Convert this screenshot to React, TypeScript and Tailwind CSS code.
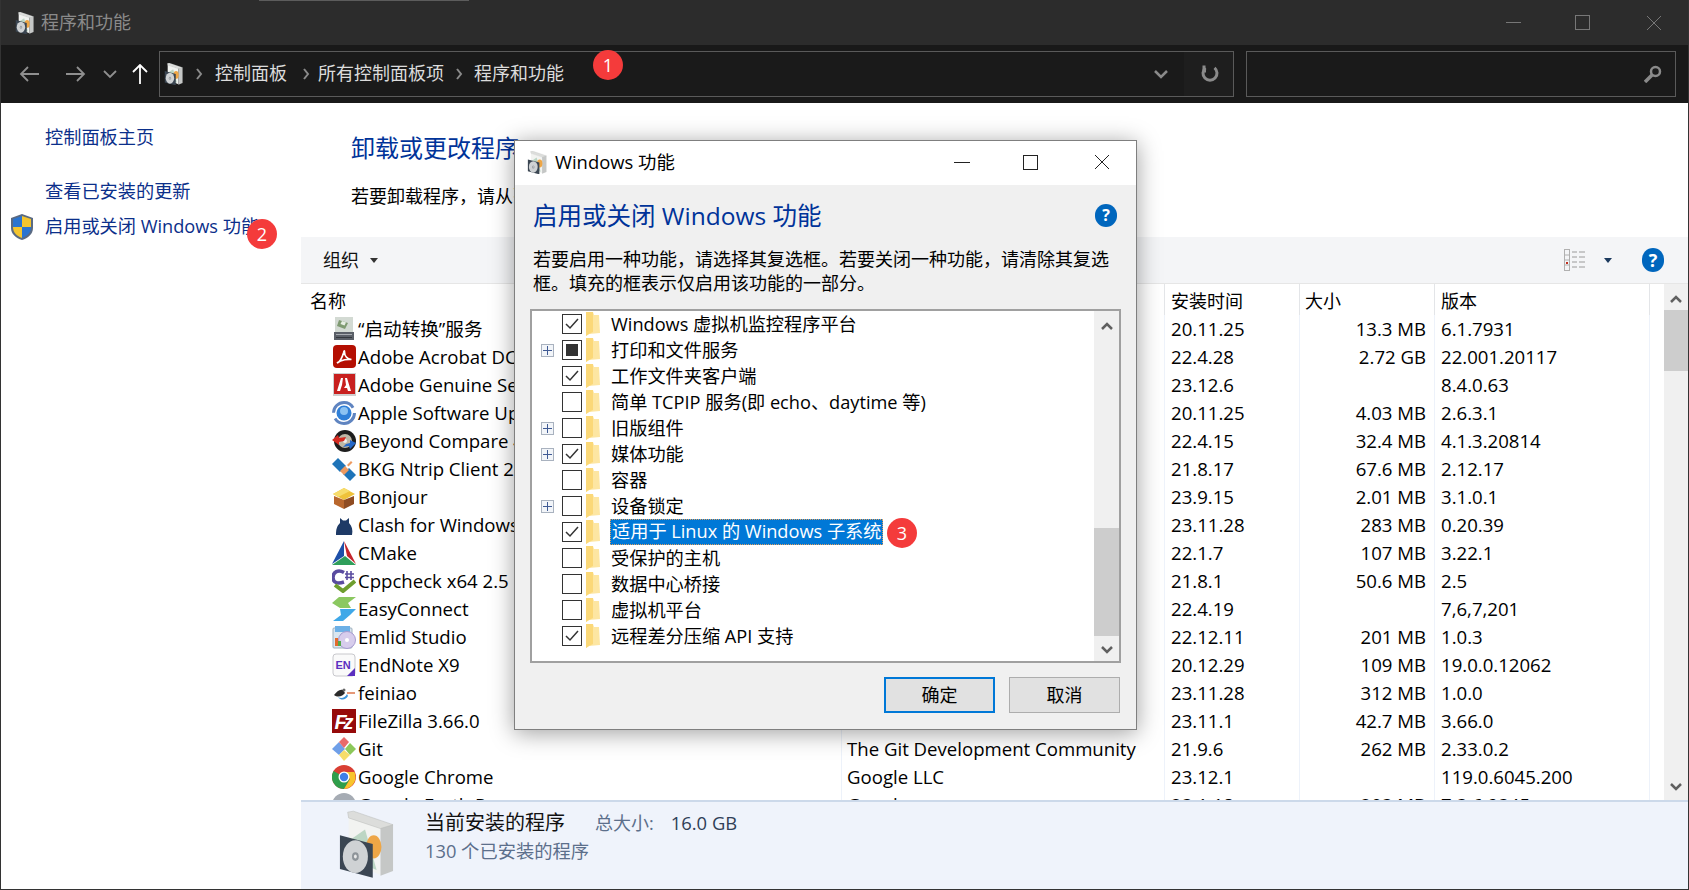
const programs = [
  { icon: "boot", name: "“启动转换”服务", publisher: "", date: "20.11.25", size: "13.3 MB", version: "6.1.7931" },
  { icon: "acrobat", name: "Adobe Acrobat DC", publisher: "", date: "22.4.28", size: "2.72 GB", version: "22.001.20117" },
  { icon: "adobe", name: "Adobe Genuine Service", publisher: "", date: "23.12.6", size: "", version: "8.4.0.63" },
  { icon: "apple", name: "Apple Software Update", publisher: "", date: "20.11.25", size: "4.03 MB", version: "2.6.3.1" },
  { icon: "beyond", name: "Beyond Compare 4", publisher: "", date: "22.4.15", size: "32.4 MB", version: "4.1.3.20814" },
  { icon: "bkg", name: "BKG Ntrip Client 2", publisher: "", date: "21.8.17", size: "67.6 MB", version: "2.12.17" },
  { icon: "bonjour", name: "Bonjour", publisher: "", date: "23.9.15", size: "2.01 MB", version: "3.1.0.1" },
  { icon: "clash", name: "Clash for Windows", publisher: "", date: "23.11.28", size: "283 MB", version: "0.20.39" },
  { icon: "cmake", name: "CMake", publisher: "", date: "22.1.7", size: "107 MB", version: "3.22.1" },
  { icon: "cppcheck", name: "Cppcheck x64 2.5", publisher: "", date: "21.8.1", size: "50.6 MB", version: "2.5" },
  { icon: "easy", name: "EasyConnect", publisher: "", date: "22.4.19", size: "", version: "7,6,7,201" },
  { icon: "emlid", name: "Emlid Studio", publisher: "", date: "22.12.11", size: "201 MB", version: "1.0.3" },
  { icon: "endnote", name: "EndNote X9", publisher: "", date: "20.12.29", size: "109 MB", version: "19.0.0.12062" },
  { icon: "feiniao", name: "feiniao", publisher: "", date: "23.11.28", size: "312 MB", version: "1.0.0" },
  { icon: "filezilla", name: "FileZilla 3.66.0", publisher: "", date: "23.11.1", size: "42.7 MB", version: "3.66.0" },
  { icon: "git", name: "Git", publisher: "The Git Development Community", date: "21.9.6", size: "262 MB", version: "2.33.0.2" },
  { icon: "chrome", name: "Google Chrome", publisher: "Google LLC", date: "23.12.1", size: "", version: "119.0.6045.200" },
  { icon: "earth", name: "Google Earth Pro", publisher: "Google", date: "23.1.18", size: "203 MB", version: "7.3.6.9345" },
];

const features = [
  { label: "Windows 虚拟机监控程序平台", state: "on", plus: false },
  { label: "打印和文件服务", state: "part", plus: true },
  { label: "工作文件夹客户端", state: "on", plus: false },
  { label: "简单 TCPIP 服务(即 echo、daytime 等)", state: "off", plus: false },
  { label: "旧版组件", state: "off", plus: true },
  { label: "媒体功能", state: "on", plus: true },
  { label: "容器", state: "off", plus: false },
  { label: "设备锁定", state: "off", plus: true },
  { label: "适用于 Linux 的 Windows 子系统", state: "on", plus: false, selected: true },
  { label: "受保护的主机", state: "off", plus: false },
  { label: "数据中心桥接", state: "off", plus: false },
  { label: "虚拟机平台", state: "off", plus: false },
  { label: "远程差分压缩 API 支持", state: "on", plus: false },
];

function ProgIcon({ name }: { name: string }) {
  const body: Record<string, React.ReactNode> = {
    boot: (
      <>
        <rect x="3" y="0" width="18" height="16" fill="#d3dad3" />
        <path d="M7 3l9 3-3 6-8-3z" fill="#7f9a72" />
        <path d="M10 4l4 1.500-1.500 3-4-1.500z" fill="#e8efe4" />
        <rect x="2" y="15" width="20" height="8" fill="#5b6068" />
        <rect x="4" y="17" width="16" height="1" fill="#a9adb2" />
        <rect x="4" y="20" width="16" height="1" fill="#34383d" />
      </>
    ),
    acrobat: (
      <>
        <rect x="1" y="0" width="23" height="23" rx="4" fill="#b40f02" />
        <path d="M5 18c3-1 5-5 6.500-10 .5-2 1-3 1-1 0 4 3 7 7 7.500-3-.5-10 0-14.500 3.500z" fill="none" stroke="#fff" strokeWidth="1.700" />
      </>
    ),
    adobe: (
      <>
        <rect x="1" y="0" width="23" height="23" fill="#cfcfcf" />
        <rect x="2" y="1" width="21" height="20" fill="#c8201f" />
        <path d="M9 5h2l-1 7-2 6H5zM13 5h2l4 13h-3l-1-3h-3l2-3z" fill="#fff" />
      </>
    ),
    apple: (
      <>
        <circle cx="12" cy="12" r="10.500" fill="none" stroke="#5f84c0" strokeWidth="3" strokeDasharray="27 6" />
        <circle cx="12" cy="12" r="7.500" fill="#2f7fd8" />
        <circle cx="12" cy="10" r="4" fill="#8cc2f2" />
      </>
    ),
    beyond: (
      <>
        <circle cx="13" cy="12" r="11" fill="#1d1d1d" />
        <circle cx="13" cy="12" r="7" fill="#bdb7a6" />
        <circle cx="13" cy="12" r="2" fill="#eee" />
        <path d="M0 11l6-5 1 3 7-1-2 4-5 1v3z" fill="#d42a20" />
        <path d="M24 14l-6 6-1-3-6 1 3-3 4-1v-3z" fill="#2468c8" />
      </>
    ),
    bkg: (
      <>
        <path d="M0 7l6-6 8 8-6 6z" fill="#1f74b8" />
        <path d="M11 17l6-6 7 7-6 6z" fill="#1f74b8" />
        <path d="M8 14l5-5 4 4-5 5z" fill="#ee9a60" />
        <path d="M15 8l4-4 1.500 1.500-4 4z" fill="#ee9a60" />
      </>
    ),
    bonjour: (
      <>
        <path d="M1 9l11-6 11 6-11 6z" fill="#efc23a" />
        <path d="M12 3l6 3-12 6-5-3z" fill="#f7dc6b" />
        <path d="M2 11l10 4v9l-10-5z" fill="#b9672d" />
        <path d="M22 11l-10 4v9l10-5z" fill="#8f4c22" />
      </>
    ),
    clash: (
      <path d="M4 22c0-6 1-9 4-12V5l3 2.500h3L17 5v5c3 3 4 7 3 12z" fill="#1e3a66" />
    ),
    cmake: (
      <>
        <path d="M12 0L0 23l12-8z" fill="#1d4fa8" />
        <path d="M12 0l12 23-9-8z" fill="#c4252c" />
        <path d="M0 24l13-9 11 9z" fill="#2f9e5b" />
        <path d="M12 3l2 11-2 1z" fill="#fff" />
      </>
    ),
    cppcheck: (
      <>
        <path d="M12 3.500C6 0 1 3 1 8.500S6 15 12 13" fill="none" stroke="#5a4ca0" strokeWidth="3.500" />
        <path d="M15 2v9M19 2v9M13 5h9M13 8.500h9" stroke="#5a4ca0" strokeWidth="1.600" />
        <path d="M3 16l8 6L23 12" fill="none" stroke="#6e9e2e" strokeWidth="4" />
      </>
    ),
    easy: (
      <>
        <path d="M7 0h17l-8 6 3 5H8L0 6z" fill="#8bc860" />
        <path d="M8 12h16l-6 6-7 6H1l8-6z" fill="#3fa8e8" />
      </>
    ),
    emlid: (
      <>
        <rect x="1" y="3" width="19" height="20" rx="1" fill="#d9e6f0" stroke="#9fb0bd" />
        <rect x="3" y="1" width="15" height="6" fill="#6cb0e6" />
        <circle cx="15" cy="15" r="8.500" fill="#d7cdec" stroke="#a79bd0" />
        <circle cx="15" cy="15" r="2" fill="#fff" />
        <rect x="3" y="13" width="3" height="8" fill="#e26a2c" />
        <rect x="6" y="16" width="3" height="5" fill="#54a94b" />
      </>
    ),
    endnote: (
      <>
        <rect x="1" y="1" width="22" height="22" rx="3" fill="#fafafa" stroke="#c8c8cc" />
        <text x="3.500" y="16" fontSize="11" fontWeight="700" fill="#5b2fc0" fontFamily="'Liberation Sans', sans-serif">EN</text>
        <path d="M23 15v8h-8z" fill="#5b2fc0" />
      </>
    ),
    feiniao: (
      <>
        <path d="M2 14c3-3 5-6 9-5l2 3c-2 3-7 5-11 2z" fill="#2b2b2b" />
        <path d="M6 16c3 2 7 1 9-3l1 2c-2 4-7 5-10 1z" fill="#3f97dc" />
        <path d="M15 12h8" stroke="#d4541e" strokeWidth="1.200" />
        <circle cx="12" cy="9" r="1.500" fill="#666" />
      </>
    ),
    filezilla: (
      <>
        <rect x="0" y="0" width="24" height="24" fill="#960a0a" />
        <text x="2.500" y="20" fontSize="20" fontWeight="700" fontStyle="italic" fill="#fff" fontFamily="'Liberation Sans', sans-serif" textLength="19">Fz</text>
      </>
    ),
    git: (
      <>
        <path d="M0 12l7-7 6 7-6 6z" fill="#6f9fe8" />
        <path d="M7 5l5-5 5 5-5 6z" fill="#e96a6a" />
        <path d="M13 12l5-6 6 6-6 6z" fill="#8cc85a" />
        <path d="M7 18l5-5 6 5-6 6z" fill="#f6dd6a" />
      </>
    ),
    chrome: (
      <>
        <circle cx="12" cy="12" r="12" fill="#d93f33" />
        <path d="M12 12L1.600 6A12 12 0 0 0 12 24l6-10z" fill="#2f9e4b" />
        <path d="M12 7h10.400A12 12 0 0 1 12 24l6-10z" fill="#f8c42c" />
        <circle cx="12" cy="12" r="5.500" fill="#fff" />
        <circle cx="12" cy="12" r="4.200" fill="#3f7fe8" />
      </>
    ),
    earth: <circle cx="12" cy="12" r="12" fill="#a6acb4" />,
  };
  return (
    <svg viewBox="0 0 24 24" className="h-6 w-6 shrink-0">
      {body[name]}
    </svg>
  );
}

function ProgramBox({ className }: { className: string }) {
  return (
    <svg viewBox="0 0 58 68" className={className}>
      <path d="M11 5l33 11v50L11 52z" fill="#f2f3f1" />
      <path d="M44 16l13-2v48l-13 5z" fill="#c5c7c6" />
      <path d="M10 1l1 6 33 11 13-4L16 0z" fill="#dcdddb" stroke="#b5b7b6" strokeWidth="0.500" />
      <path d="M15 28l13-9 12 42-14-6z" fill="#bcd6c4" />
      <ellipse cx="37" cy="37" rx="8" ry="12" fill="#eea646" />
      <path d="M2 25l34 9v35L2 60z" fill="#3b4652" />
      <ellipse cx="18" cy="47" rx="13" ry="17" fill="#cfd2d4" />
      <ellipse cx="18" cy="47" rx="3.500" ry="4.500" fill="#8e9499" />
      <ellipse cx="18" cy="47" rx="1.500" ry="2" fill="#e8e8e8" />
    </svg>
  );
}

function HelpIcon({ className }: { className: string }) {
  return (
    <div className={`flex shrink-0 items-center justify-center rounded-full bg-[#0066bd] font-bold text-white ${className}`}>?</div>
  );
}

function Badge({ n, className }: { n: number; className: string }) {
  return (
    <div className={`absolute flex h-[30px] w-[30px] items-center justify-center rounded-full bg-[#f43b3b] text-[18px] text-white ${className}`}>{n}</div>
  );
}

function Crumb() {
  return (
    <svg viewBox="0 0 8 14" className="h-[14px] w-2 shrink-0">
      <path d="M2 2l4 5-4 5" fill="none" stroke="#8a8a8a" strokeWidth="2" />
    </svg>
  );
}

function Folder() {
  return (
    <svg viewBox="0 0 14 24" className="h-6 w-[14px] shrink-0">
      <path d="M0 0h7l1 3h5l1 18-11 1-3 2z" fill="#fde6a2" />
      <path d="M0 0h7v20l-4 2-3 2z" fill="#fbd878" />
    </svg>
  );
}

function FeatureRow({ f }: { f: (typeof features)[number] }) {
  return (
    <div className="flex h-[26px] items-center text-black">
      <div className="flex w-[30px] shrink-0 justify-end pr-[8px]">
        {f.plus && (
          <div className="flex h-[13px] w-[13px] items-center justify-center border border-[#a9b2bf] bg-[#f2f5f9]">
            <svg viewBox="0 0 9 9" className="h-[9px] w-[9px]">
              <path d="M4.500 0v9M0 4.500h9" stroke="#3f5a94" strokeWidth="1" />
            </svg>
          </div>
        )}
      </div>
      <div className="flex h-5 w-5 shrink-0 items-center justify-center border border-[#333] bg-white">
        {f.state === "on" && (
          <svg viewBox="0 0 14 12" className="h-3 w-[14px]">
            <path d="M1 6l4 4 8-9" fill="none" stroke="#333" strokeWidth="1.500" />
          </svg>
        )}
        {f.state === "part" && <div className="h-3 w-3 bg-[#333]" />}
      </div>
      <div className="ml-1">
        <Folder />
      </div>
      <div
        className={
          f.selected
            ? "ml-[10px] flex h-[26px] w-[273px] items-center whitespace-nowrap border border-dotted border-[#e0a060] bg-[#0078d7] pl-px text-[18.200px] text-white"
            : "ml-[11px] whitespace-nowrap pt-[2px] text-[18.200px]"
        }
      >
        {f.label}
      </div>
    </div>
  );
}

export default function App() {
  return (
    <div className="relative flex h-[890px] w-[1689px] flex-col overflow-hidden border-x border-b border-x-[#333] border-b-[#333] bg-white font-['Open_Sans','Noto_Sans_CJK_SC',sans-serif] text-[18px]">
      <div className="absolute left-[258px] top-0 h-px w-[210px] bg-[#5c5c5c]" />

      {/* Title bar */}
      <div className="flex h-[45px] shrink-0 items-center bg-[#2c2c2c] text-[#8a8a8a]">
        <ProgramBox className="ml-[14px] h-[22px] w-[19px]" />
        <span className="ml-[7px]">程序和功能</span>
        <div className="ml-auto flex items-center">
          <div className="h-px w-[15px] bg-[#777]" />
          <div className="ml-[54px] h-[15px] w-[15px] border border-[#777]" />
          <svg viewBox="0 0 16 16" className="ml-[56px] mr-[26px] h-4 w-4">
            <path d="M1 1l14 14M15 1L1 15" stroke="#777" strokeWidth="1" />
          </svg>
        </div>
      </div>

      {/* Nav bar */}
      <div className="flex h-[58px] shrink-0 items-center bg-[#191919] text-[#dcdcdc]">
        <svg viewBox="0 0 20 16" className="ml-[18px] h-4 w-5">
          <path d="M9 1L2 8l7 7M2 8h18" fill="none" stroke="#8f8f8f" strokeWidth="1.800" />
        </svg>
        <svg viewBox="0 0 20 16" className="ml-[27px] h-4 w-5">
          <path d="M11 1l7 7-7 7M18 8H0" fill="none" stroke="#8f8f8f" strokeWidth="1.800" />
        </svg>
        <svg viewBox="0 0 14 9" className="ml-[17px] h-[9px] w-[14px]">
          <path d="M1 1l6 6 6-6" fill="none" stroke="#8f8f8f" strokeWidth="1.800" />
        </svg>
        <svg viewBox="0 0 16 20" className="ml-[15px] h-5 w-4">
          <path d="M1 8l7-7 7 7M8 1v19" fill="none" stroke="#fff" strokeWidth="1.800" />
        </svg>
        <div className="ml-[11px] flex h-[46px] w-[1075px] items-center border border-[#5a5a5a] bg-[#1a1a1a]">
          <ProgramBox className="ml-[4px] h-[22px] w-[19px]" />
          <div className="ml-[12px]"><Crumb /></div>
          <span className="-mt-[2px] ml-[12px]">控制面板</span>
          <div className="ml-[15px]"><Crumb /></div>
          <span className="-mt-[2px] ml-[8px]">所有控制面板项</span>
          <div className="ml-[11px]"><Crumb /></div>
          <span className="-mt-[2px] ml-[11px]">程序和功能</span>
          <svg viewBox="0 0 14 10" className="ml-auto mt-[2px] h-[10px] w-[14px]">
            <path d="M1 1l6 6 6-6" fill="none" stroke="#8a8a8a" strokeWidth="2.500" />
          </svg>
          <div className="ml-[16px] flex h-full w-[49px] items-center justify-center bg-[#1e1e1e]">
            <svg viewBox="0 0 18 18" className="-mt-[2px] ml-[2px] h-[18px] w-[18px]">
              <path d="M3 1.500V7h2" fill="none" stroke="#8a8a8a" strokeWidth="3" />
              <path d="M4.500 3.800a7 7 0 1 0 9 0" fill="none" stroke="#8a8a8a" strokeWidth="3" />
            </svg>
          </div>
        </div>
        <div className="ml-[12px] flex h-[46px] w-[430px] items-center justify-end border border-[#5a5a5a] bg-[#1a1a1a] pr-[13px]">
          <svg viewBox="0 0 18 18" className="h-[18px] w-[18px]">
            <circle cx="11.500" cy="6.500" r="4.500" fill="none" stroke="#8a8a8a" strokeWidth="2.500" />
            <path d="M8 10l-7 7" stroke="#8a8a8a" strokeWidth="3.500" />
          </svg>
        </div>
      </div>

      {/* Body */}
      <div className="flex min-h-0 flex-1">
        <aside className="w-[300px] shrink-0 text-[18.200px] text-[#0b2f8a]">
          <div className="ml-[44px] mt-[22px] h-6 leading-6">控制面板主页</div>
          <div className="ml-[44px] mt-[30px] h-6 leading-6">查看已安装的更新</div>
          <div className="mt-3 flex h-6 items-center whitespace-nowrap">
            <svg viewBox="0 0 22 26" className="ml-[10px] h-[26px] w-[22px] shrink-0">
              <path d="M11 0l11 4v10c0 6-5 10-11 12C5 24 0 20 0 14V4z" fill="#5a6a82" />
              <path d="M11 2v11H2V5z" fill="#2a74d0" />
              <path d="M11 2l9 3v8h-9z" fill="#f4c52e" />
              <path d="M2 13h9v11c-5-2-9-5-9-11z" fill="#f4c52e" />
              <path d="M11 13h9c0 6-4 9-9 11z" fill="#2a74d0" />
            </svg>
            <span className="ml-[12px]">启用或关闭 Windows 功能</span>
          </div>
        </aside>

        <main className="flex min-w-0 flex-1 flex-col">
          <div className="h-[134px] shrink-0 pl-[50px]">
            <div className="pt-[30px] text-[24px] leading-[30px] text-[#003399]">卸载或更改程序</div>
            <div className="mt-[21px] leading-6 text-black">若要卸载程序，请从列表中将其选中</div>
          </div>

          <div className="flex h-[47px] shrink-0 items-center border-b border-[#e6e6e6] bg-[#f4f5f7] pl-[22px] text-[#111]">
            <span>组织</span>
            <svg viewBox="0 0 8 5" className="ml-[11px] h-[5px] w-2">
              <path d="M0 0h8L4 5z" fill="#333" />
            </svg>
            <svg viewBox="0 0 22 22" className="ml-auto h-[22px] w-[22px]">
              <rect x=".5" y=".5" width="5" height="21" fill="none" stroke="#b0b0b0" />
              <path d="M0 6h6M0 11h6M0 16h6" stroke="#b0b0b0" />
              <rect x="2" y="13" width="2" height="2" fill="#c03020" />
              <path d="M8 3h5M15 3h6M8 8h5M15 8h6M8 13h5M15 13h6M8 18h5M15 18h6" stroke="#9a9a9a" />
            </svg>
            <svg viewBox="0 0 8 5" className="ml-[18px] h-[5px] w-2">
              <path d="M0 0h8L4 5z" fill="#1c3a5e" />
            </svg>
            <HelpIcon className="ml-[30px] mr-[24px] h-6 w-[22px] text-[18px]" />
          </div>

          <div className="flex min-h-0 flex-1">
            <div className="flex min-w-0 flex-1 flex-col overflow-hidden pr-[13px] text-black">
              <div className="grid h-[31px] shrink-0 grid-cols-[540px_323px_135px_135px_216px] items-center leading-[35px]">
                <div className="h-full pl-[9px]">名称</div>
                <div />
                <div className="h-full border-l border-[#e3e5e8] pl-[6px]">安装时间</div>
                <div className="h-full border-l border-[#e3e5e8] pl-[5px]">大小</div>
                <div className="h-full border-r border-l border-[#e3e5e8] pl-[6px]">版本</div>
              </div>
              {programs.map((p) => (
                <div key={p.name} className="grid h-7 shrink-0 grid-cols-[540px_323px_135px_135px_216px] items-center whitespace-nowrap text-[18.600px] leading-7">
                  <div className="flex items-center overflow-hidden pl-[31px]">
                    <ProgIcon name={p.icon} />
                    <span className="ml-[2px]">{p.name}</span>
                  </div>
                  <div className="h-full border-l border-[#edf2fa] pl-[5px]">{p.publisher}</div>
                  <div className="h-full border-l border-[#edf2fa] pl-[6px]">{p.date}</div>
                  <div className="h-full border-l border-[#edf2fa] pr-2 text-right">{p.size}</div>
                  <div className="h-full border-x border-[#edf2fa] pl-[6px]">{p.version}</div>
                </div>
              ))}
            </div>
            <div className="flex w-6 shrink-0 flex-col bg-[#f0f0f0]">
              <div className="flex h-[26px] shrink-0 items-center justify-center pt-[4px]">
                <svg viewBox="0 0 12 8" className="h-2 w-3"><path d="M1 7l5-5 5 5" fill="none" stroke="#606060" strokeWidth="2.500" /></svg>
              </div>
              <div className="h-[61px] shrink-0 bg-[#cdcdcd]" />
              <div className="flex flex-1 items-end justify-center pb-[9px]">
                <svg viewBox="0 0 12 8" className="h-2 w-3"><path d="M1 1l5 5 5-5" fill="none" stroke="#606060" strokeWidth="2.500" /></svg>
              </div>
            </div>
          </div>

          <div className="flex h-[89px] shrink-0 border-t-2 border-[#ccd9ea] bg-[#eff3fb]">
            <ProgramBox className="ml-[37px] mt-2 h-[68px] w-[56px] shrink-0" />
            <div className="ml-[31px]">
              <div className="mt-[7px] flex h-7 items-center">
                <span className="text-[20px] text-[#111]">当前安装的程序</span>
                <span className="ml-[30px] text-[#5c6f8b]">总大小:</span>
                <span className="ml-[17px] text-[18.400px] text-[#2f4057]">16.0 GB</span>
              </div>
              <div className="text-[18.300px] leading-7 text-[#5c6f8b]">130 个已安装的程序</div>
            </div>
          </div>
        </main>
      </div>

      {/* Step markers */}
      <Badge n={1} className="left-[592px] top-[50px]" />
      <Badge n={2} className="left-[246px] top-[219px]" />

      {/* Windows features dialog */}
      <div className="absolute left-[513px] top-[140px] flex h-[590px] w-[623px] flex-col border border-[#7f7f7f] bg-[#f0f0f0] text-black shadow-[0_3px_22px_rgba(0,0,0,0.38)]">
        <div className="flex h-[44px] shrink-0 items-center bg-white pb-[2px]">
          <ProgramBox className="ml-[12px] h-[23px] w-[20px]" />
          <span className="ml-2 text-[18.400px]">Windows 功能</span>
          <div className="ml-auto h-px w-[16px] bg-[#222]" />
          <div className="ml-[53px] h-[15px] w-[15px] border border-[#222]" />
          <svg viewBox="0 0 16 16" className="ml-[56px] mr-[26px] h-4 w-4">
            <path d="M1 1l14 14M15 1L1 15" stroke="#222" strokeWidth="1" />
          </svg>
        </div>
        <div className="flex h-[62px] shrink-0 items-center pl-[18px] pr-[19px]">
          <span className="text-[24.500px] text-[#003399]">启用或关闭 Windows 功能</span>
          <HelpIcon className="ml-auto mt-[-2px] h-[23px] w-[22px] text-[16px]" />
        </div>
        <div className="h-[62px] shrink-0 pl-[18px] pr-[15px] leading-6">
          若要启用一种功能，请选择其复选框。若要关闭一种功能，请清除其复选框。填充的框表示仅启用该功能的一部分。
        </div>
        <div className="ml-[15px] flex h-[354px] w-[591px] shrink-0 border-2 border-[#a0a0a0] bg-white">
          <div className="min-w-0 flex-1">
            {features.map((f) => (
              <FeatureRow key={f.label} f={f} />
            ))}
          </div>
          <div className="flex w-[25px] shrink-0 flex-col bg-[#f0f0f0]">
            <div className="flex h-[30px] shrink-0 items-center justify-center">
              <svg viewBox="0 0 12 8" className="h-2 w-3"><path d="M1 7l5-5 5 5" fill="none" stroke="#606060" strokeWidth="2.500" /></svg>
            </div>
            <div className="h-[187px] shrink-0" />
            <div className="h-[108px] shrink-0 bg-[#cdcdcd]" />
            <div className="flex flex-1 items-center justify-center pt-[2px]">
              <svg viewBox="0 0 12 8" className="h-2 w-3"><path d="M1 1l5 5 5-5" fill="none" stroke="#606060" strokeWidth="2.500" /></svg>
            </div>
          </div>
        </div>
        <div className="mt-[14px] flex justify-end gap-[14px] pr-[16px]">
          <button className="h-[36px] w-[111px] border-2 border-[#0078d7] bg-[#e1e1e1] text-black">确定</button>
          <button className="h-[36px] w-[111px] border border-[#adadad] bg-[#e1e1e1] text-black">取消</button>
        </div>
        <Badge n={3} className="left-[372px] top-[377px]" />
      </div>
    </div>
  );
}
